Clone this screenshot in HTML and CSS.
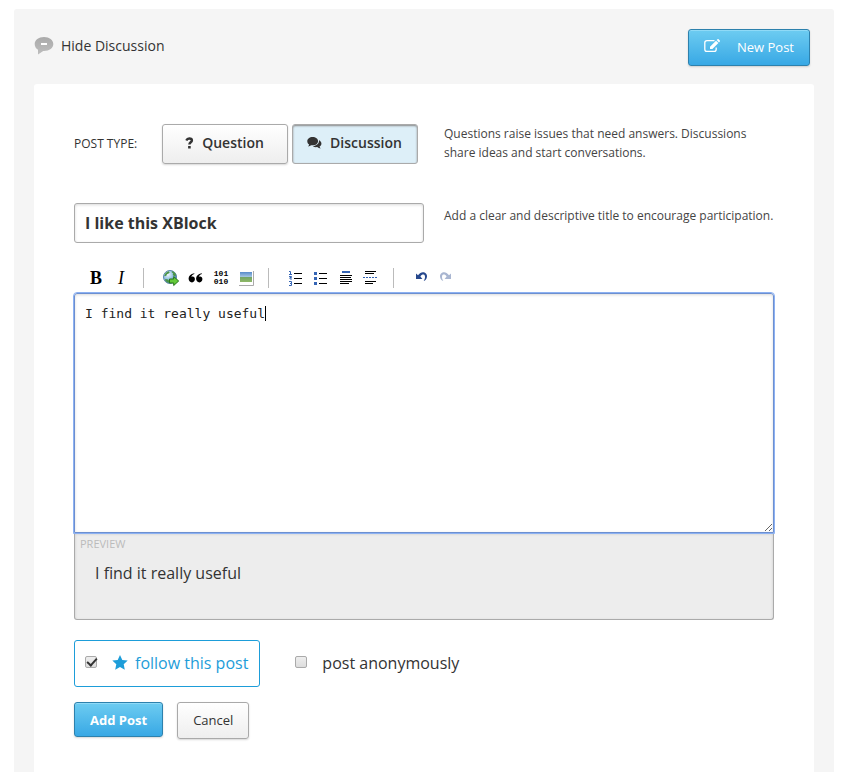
FILE: index.html
```html
<!DOCTYPE html>
<html lang="en">
<head>
<meta charset="utf-8">
<title>Discussion</title>
<link rel="stylesheet" href="styles.css">
</head>
<body>
<main class="discussion">
  <header class="discussion-header">
    <a class="toggle" href="#new-post">
      <svg class="toggle-icon" width="20" height="18" viewBox="0 0 20 18" aria-hidden="true">
        <defs><linearGradient id="bubble" x1="0" y1="0" x2="0" y2="1"><stop offset="0" stop-color="#aaa"/><stop offset="1" stop-color="#bdbdbd"/></linearGradient></defs>
        <path fill="url(#bubble)" d="M10 0C4.600 0 .7 3 .7 7c0 2.600 1.300 4.600 3.300 5.700V17.400l5.200-3.400h.8c5.400 0 9.300-3 9.300-7S15.400 0 10 0z"/>
        <path fill="#fff" d="M7 6h6v2H7z"/>
      </svg>
      Hide Discussion
    </a>
    <button class="button button-primary button-new" type="button">
      <svg width="16" height="14" viewBox="0 0 16 14" aria-hidden="true">
        <path fill="none" stroke="currentColor" stroke-width="1.300" d="M10.500 1.600H3A2.200 2.200 0 0 0 .8 3.800v6.400A2.200 2.200 0 0 0 3 12.400h7a2.200 2.200 0 0 0 2.200-2.200V8.500"/>
        <path fill="currentColor" d="M12 1.700l2.400 2.400-6 6H6V7.700zM12.700 1l.8-.7c.4-.3.8-.3 1.100 0L15.800 1.500c.3.300.3.700 0 1.100l-.8.800z"/>
      </svg>
      New Post
    </button>
  </header>

  <form class="new-post" id="new-post">
    <div class="row">
      <fieldset class="post-type" aria-labelledby="post-type-label">
        <span class="post-type-label" id="post-type-label">POST TYPE:</span>
        <span class="options">
          <label class="option">
            <input class="option-input" type="radio" name="type" value="question">
            <svg width="9" height="12" viewBox="0 0 9 12" aria-hidden="true"><path fill="none" stroke="currentColor" stroke-width="2.400" d="M1.300 3.400C2 1.900 3 1.500 4.300 1.500c1.500 0 2.600.7 2.600 1.900 0 1.800-2.500 1.900-2.500 4.100"/><path fill="currentColor" d="M3.100 9h2.600v2.500H3.100z"/></svg>
            Question
          </label>
          <label class="option option-selected">
            <input class="option-input" type="radio" name="type" value="discussion" checked>
            <svg width="15" height="12" viewBox="0 0 16 12" preserveAspectRatio="none" aria-hidden="true"><path fill="currentColor" d="M6 0C2.700 0 .3 1.900.3 4.300c0 1.400.8 2.500 2 3.300-.2.800-.6 1.300-1.200 1.900 1.400-.1 2.500-.6 3.400-1.300.5.100 1 .1 1.500.1 3.300 0 5.800-1.800 5.800-4.100S9.300 0 6 0zM12.800 3.300c.4 3.300-2.700 5.700-6.600 5.900 1.200.9 3.100 1.200 4.700.9 1 .8 2.200 1.300 3.700 1.400-.6-.6-1-1.100-1.200-1.900 1.300-.8 2-1.700 2-2.900 0-1.500-1-2.700-2.600-3.400z"/></svg>
            Discussion
          </label>
        </span>
      </fieldset>
      <p class="hint">Questions raise issues that need answers. Discussions share ideas and start conversations.</p>
    </div>

    <div class="row row-title">
      <input class="title" type="text" aria-label="Title" value="I like this XBlock">
      <p class="hint">Add a clear and descriptive title to encourage participation.</p>
    </div>

    <div class="editor">
      <div class="toolbar" role="toolbar" aria-label="Formatting">
        <button class="tool tool-bold" type="button" aria-label="Bold">B</button>
        <button class="tool tool-italic" type="button" aria-label="Italic">I</button>
        <span class="separator"></span>
        <button class="tool" type="button" aria-label="Hyperlink">
          <svg width="20" height="20" viewBox="0 0 20 20">
            <defs><radialGradient id="globe" cx=".35" cy=".3" r=".75"><stop offset="0" stop-color="#f2f9fd"/><stop offset=".55" stop-color="#8dbbe0"/><stop offset="1" stop-color="#316a9f"/></radialGradient></defs>
            <circle cx="9" cy="9" r="6.500" fill="url(#globe)" stroke="#5b86ab"/>
            <path fill="#4b9546" d="M3.200 8C4 5.500 5.300 4 7.500 3.200l1.300 1L7.600 5.500l-1.700.8L5.500 7.500 4 8.300zM11 3l3 1.800 1.200 2.500-1.700 1-1.800-1.300.5-1.500-1.500-1.200zM4.500 11l2.600.5 1.200 1.600-.6 1.700C6 14.500 4.800 13.500 4 12z"/>
            <path fill="#63c939" stroke="#287719" d="M8.500 11h4.200V8.600l5 4.400-5 4.500V15H8.500z"/>
          </svg>
        </button>
        <button class="tool" type="button" aria-label="Blockquote">
          <svg width="20" height="20" viewBox="0 0 20 20"><path d="M8.200 5.300l.2.600C6.400 6.600 5.500 7.700 5.300 9c.4-.3.800-.4 1.300-.4 1.400 0 2.300.9 2.300 2.500S7.800 14.500 6 14.500c-2.100 0-3.400-1.600-3.400-3.900 0-2.500 2-4.600 5.600-5.300zM15.700 5.300l.2.600c-2 .7-2.900 1.800-3.100 3.100.4-.3.800-.4 1.300-.4 1.400 0 2.300.9 2.300 2.500s-1.100 3.400-2.900 3.400c-2.100 0-3.400-1.600-3.400-3.900 0-2.500 2-4.600 5.600-5.300z"/></svg>
        </button>
        <button class="tool tool-code" type="button" aria-label="Code sample">101<br>010</button>
        <button class="tool" type="button" aria-label="Image">
          <svg width="20" height="20" viewBox="0 0 20 20">
            <defs><linearGradient id="photo" x1="0" y1="0" x2="0" y2="1"><stop offset="0" stop-color="#568acb"/><stop offset=".5" stop-color="#a8c8e2"/><stop offset=".55" stop-color="#74a667"/><stop offset="1" stop-color="#8fb866"/></linearGradient></defs>
            <path fill="#eee" d="M3 3h15v15H3z"/><path fill="#fff" d="M3 3h14v14H3z"/>
            <path fill="none" stroke="#aaa" d="M3 17.500h14.500V3"/>
            <path fill="url(#photo)" d="M4 4h12v10H4z"/>
          </svg>
        </button>
        <span class="separator"></span>
        <button class="tool" type="button" aria-label="Numbered list">
          <svg width="20" height="20" viewBox="0 0 20 20"><path d="M8 5h8v1H8zM8 10h8v1H8zM8 15h8v1H8z"/><path fill="none" stroke="#3565b5" d="M3 3.500h1.500V6M3 6.500h3M3 8.500h2.500v1H4v1.500h2M3 13.500h2.500v2H4h1.500v2H3"/></svg>
        </button>
        <button class="tool" type="button" aria-label="Bulleted list">
          <svg width="20" height="20" viewBox="0 0 20 20"><path d="M8 5h8v1H8zM8 10h8v1H8zM8 15h8v1H8z"/><path fill="#3565b5" d="M3 4h3v3H3zM3 9h3v3H3zM3 14h3v3H3z"/></svg>
        </button>
        <button class="tool" type="button" aria-label="Heading">
          <svg width="20" height="20" viewBox="0 0 20 20"><path fill="#3565b5" d="M6 3h8v2H6z"/><path d="M4 7h12v1H4zM4 9h11v1H4zM4 11h12v1H4zM4 13h12v1H4zM4 15h9v1H4z"/></svg>
        </button>
        <button class="tool" type="button" aria-label="Horizontal rule">
          <svg width="20" height="20" viewBox="0 0 20 20"><path d="M4 3h11v1H4zM4 5h9v1H4zM4 13h11v1H4zM4 15h8v1H4z"/><path stroke="#3565b5" stroke-dasharray="2 1" d="M2 9.500h15"/></svg>
        </button>
        <span class="separator"></span>
        <button class="tool" type="button" aria-label="Undo">
          <svg width="20" height="20" viewBox="0 0 20 20"><path fill="#27488d" d="M5 5.500l2 1.700C9 4.500 11 3.800 13 4.300c2 .5 3.300 2.500 3 4.500-.3 2-1.500 3.800-3.300 4.300 1-1.500 1.600-3.700 1.200-5.100-.6-2-3-2-4.500.5l2 2.500H5z"/></svg>
        </button>
        <button class="tool" type="button" aria-label="Redo" disabled>
          <svg width="20" height="20" viewBox="0 0 20 20"><path fill="#a9b6d1" d="M15 5.500l-2 1.700C11 4.500 9 3.800 7 4.300c-2 .5-3.300 2.500-3 4.500.3 2 1.500 3.800 3.300 4.300-1-1.500-1.600-3.700-1.200-5.100.6-2 3-2 4.500.5l-2 2.500H15z"/></svg>
        </button>
      </div>
      <div class="body-field">
        <textarea class="body-text" aria-label="Post body" spellcheck="false">I find it really useful</textarea>
        <span class="caret"></span>
      </div>
      <section class="preview">
        <h2 class="preview-label">PREVIEW</h2>
        <p class="preview-text">I find it really useful</p>
      </section>
    </div>

    <div class="post-options">
      <label class="check check-follow">
        <input type="checkbox" checked>
        <svg width="16" height="15" viewBox="0 0 16 15" aria-hidden="true"><path fill="currentColor" d="M8 0l2.300 5 5.400.6-4 3.700 1.100 5.400L8 12l-4.800 2.700 1.100-5.400-4-3.700L5.700 5z"/></svg>
        follow this post
      </label>
      <label class="check">
        <input type="checkbox">
        post anonymously
      </label>
    </div>

    <div class="actions">
      <button class="button button-primary button-add" type="button">Add Post</button>
      <button class="button button-cancel" type="button">Cancel</button>
    </div>
  </form>
</main>
</body>
</html>
```
FILE: styles.css
```css
* {
  box-sizing: border-box;
}

body {
  margin: 9px 8px 0 14px;
  background: #fff;
  color: #333;
  font-family: "Open Sans", sans-serif;
}

.discussion {
  padding: 20px 20px 0;
  border-radius: 3px;
  background: #f5f5f5;
}

.discussion-header {
  display: flex;
  justify-content: space-between;
  align-items: flex-start;
  padding-right: 4px;
  margin-bottom: 18px;
}

.toggle {
  display: flex;
  align-items: center;
  gap: 7px;
  padding-top: 6px;
  color: #333;
  font-size: 14px;
  line-height: 22px;
  text-decoration: none;
}

.button {
  border: 1px solid #a9a9a9;
  border-radius: 3px;
  background: linear-gradient(#fff, #eee);
  box-shadow: 0 1px 2px rgba(0, 0, 0, 0.16);
  color: #333;
  font: 13px/20px "Open Sans", sans-serif;
}

.button-primary {
  border-color: #2d81ad;
  background: linear-gradient(#6dccf1, #38a8e5);
  box-shadow: inset 0 1px 0 #8fdaf7, 0 1px 2px rgba(0, 0, 0, 0.16);
  color: #fff;
}

.button-new {
  display: flex;
  align-items: center;
  gap: 17px;
  height: 37px;
  padding: 0 15px 2px;
}

.button-new svg {
  margin-bottom: 2px;
}

.new-post {
  padding: 40px 40px 60px;
  border-radius: 3px 3px 0 0;
  background: #fff;
}

.row {
  display: grid;
  grid-template-columns: 1fr 1fr;
  gap: 20px;
  margin-right: -20px;
  margin-bottom: 39px;
}

.row-title {
  margin-bottom: 25px;
}

.post-type {
  display: flex;
  justify-content: space-between;
  align-items: center;
  min-width: 0;
  margin: 0 6px 0 0;
  padding: 0;
  border: 0;
}

.post-type-label {
  padding-bottom: 2px;
  font-size: 12px;
}

.options {
  display: flex;
  gap: 4px;
}

.option {
  display: flex;
  justify-content: center;
  align-items: center;
  gap: 8px;
  width: 126px;
  height: 40px;
  padding: 0 1px 4px 0;
  border: 1px solid #aaa;
  border-radius: 3px;
  background: linear-gradient(#fff, #eee);
  box-shadow: 0 1px 2px rgba(0, 0, 0, 0.16);
  font-size: 14px;
  font-weight: 600;
}

.option svg {
  margin-top: 2px;
}

.option-input {
  display: none;
}

.option-selected {
  background: #ddeff8;
  box-shadow: inset 0 1px 2px #888;
}

.hint {
  margin: 0;
  padding-right: 20px;
  color: #444;
  font-size: 12px;
  line-height: 19px;
}

.row-title .hint {
  padding-top: 3px;
}

.title {
  width: 100%;
  height: 40px;
  padding: 0 10px;
  border: 1px solid #aaa;
  border-radius: 3px;
  box-shadow: inset 0 1px 3px rgba(0, 0, 0, 0.15);
  color: #333;
  font: 700 16px "Open Sans", sans-serif;
}

.toolbar {
  display: flex;
  gap: 5px;
  padding: 0 12px;
  margin-bottom: 5px;
}

.tool {
  width: 20px;
  height: 20px;
  padding: 0;
  border: 0;
  background: none;
  color: #000;
  line-height: 20px;
}

.tool svg {
  display: block;
}

.tool-bold {
  font: 700 18px/20px "Liberation Serif", serif;
}

.tool-italic {
  font: italic 18px/20px "Liberation Serif", serif;
}

.tool-code {
  font: 700 8px/8px "Liberation Mono", monospace;
}

.separator {
  width: 20px;
  height: 20px;
  background: linear-gradient(#bbb, #bbb) 7px 0 / 1px 20px no-repeat;
}

.body-field {
  position: relative;
}

.body-text {
  display: block;
  width: 100%;
  height: 240px;
  padding: 10px;
  border: 1px solid #6c8fd0;
  border-radius: 3px 3px 0 0;
  outline: 1px solid #8cb1f2;
  box-shadow: inset 0 1px 3px rgba(0, 0, 0, 0.15);
  color: #222;
  font: 13px/20px "DejaVu Sans Mono", monospace;
  resize: vertical;
}

.caret {
  position: absolute;
  top: 13px;
  left: 191px;
  width: 1px;
  height: 15px;
  background: #000;
}

.preview {
  min-height: 87px;
  padding: 2px 20px 20px 5px;
  border: 1px solid #aaa;
  border-top: 0;
  border-radius: 0 0 3px 3px;
  background: #ededed;
  box-shadow: inset 0 1px 3px rgba(0, 0, 0, 0.15);
}

.preview-label {
  margin: 0;
  color: #bbb;
  font-size: 11px;
  font-weight: 400;
  line-height: 18px;
}

.preview-text {
  margin: 8px 0 0 15px;
  font-size: 16px;
  line-height: 24px;
}

.post-options {
  display: flex;
  gap: 24px;
  margin: 20px 0 15px;
}

.check {
  display: flex;
  align-items: center;
  height: 47px;
  padding: 0 11px 2px 10px;
  border: 1px solid transparent;
  border-radius: 3px;
  font-size: 16px;
}

.check-follow {
  border-color: #1d9dd9;
  color: #1d9dd9;
}

.check svg {
  margin-right: 7px;
}

.check input {
  appearance: none;
  width: 12px;
  height: 12px;
  margin: 0 15px 2px 0;
  border: 1px solid #aaa;
  border-radius: 2px;
  background: linear-gradient(#eee, #ddd);
}

.check input:checked::before {
  display: block;
  width: 8px;
  height: 4px;
  margin: 1px;
  border: solid #333;
  border-width: 0 0 2px 2px;
  content: "";
  transform: rotate(-48deg);
}

.actions {
  display: flex;
  align-items: flex-start;
  gap: 14px;
}

.button-add {
  height: 35px;
  padding: 0 15px;
  font-weight: 700;
}

.button-cancel {
  height: 37px;
  padding: 0 15px 2px;
}
```
